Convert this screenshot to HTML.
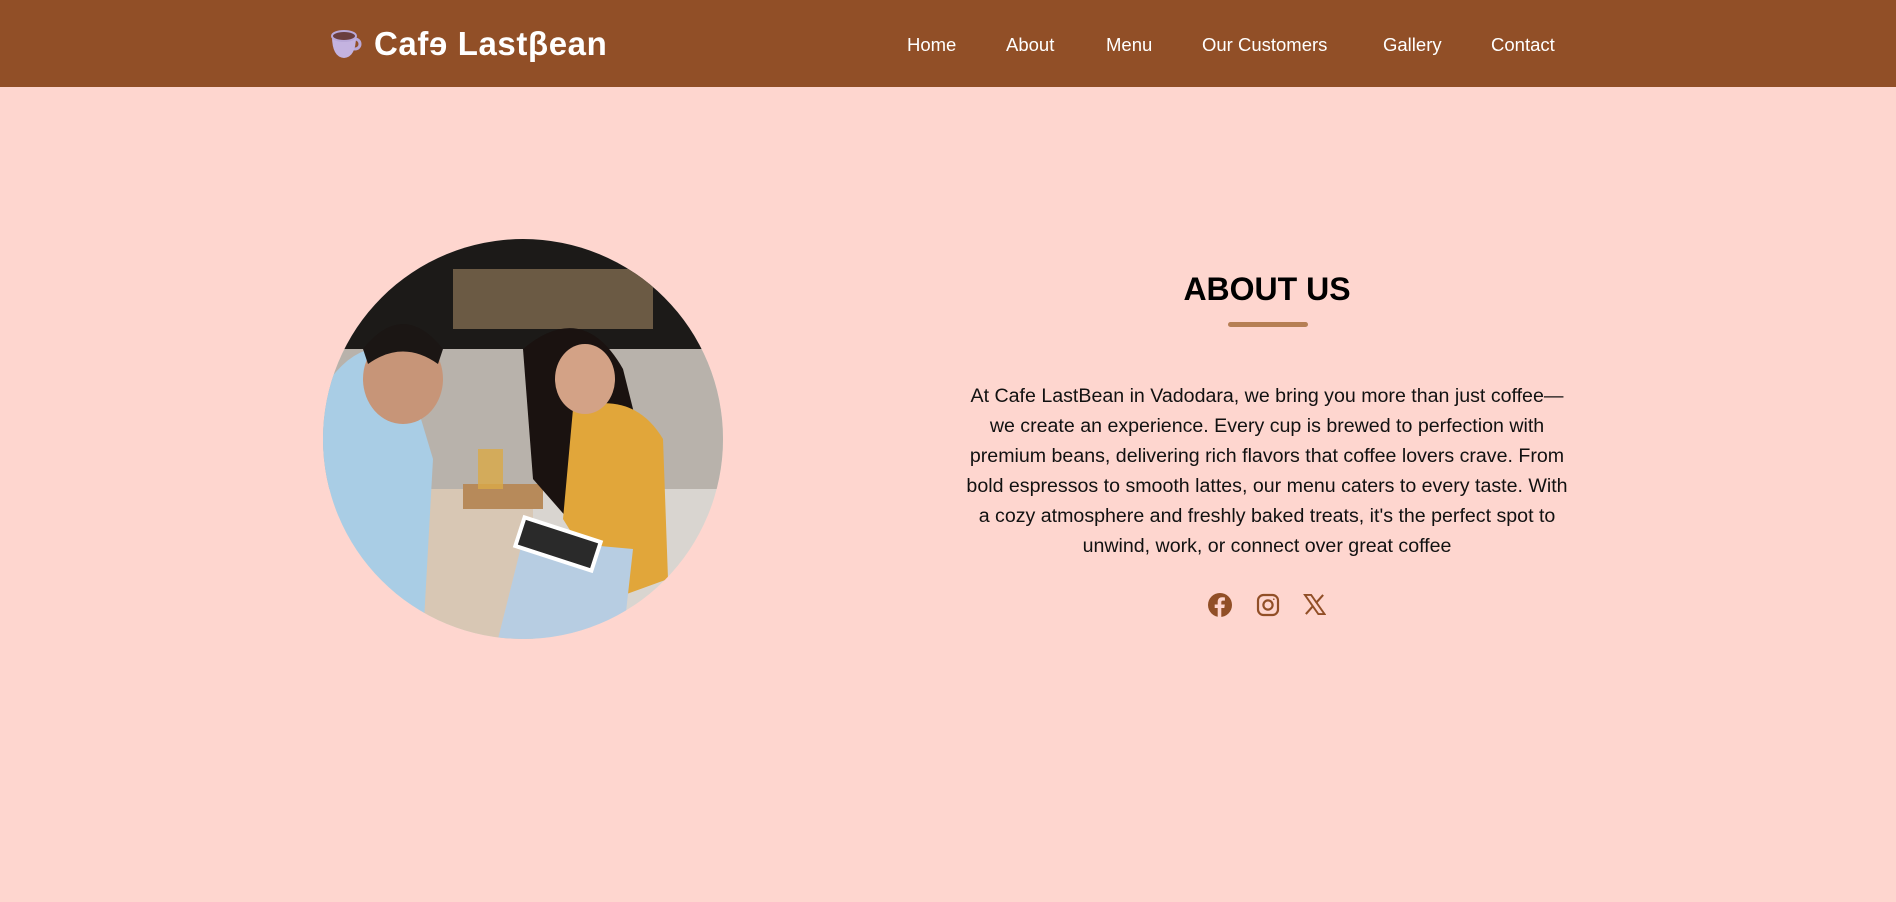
<!DOCTYPE html>
<html><head><meta charset="utf-8"><style>
*{margin:0;padding:0;box-sizing:border-box}
body{width:1896px;height:902px;background:#fed6cf;font-family:"Liberation Sans",sans-serif;position:relative;overflow:hidden}
header{position:absolute;left:0;top:0;width:1896px;height:87px;background:#914f27}
.logo{position:absolute;left:374px;top:25px;color:#fff;font-weight:bold;font-size:33px;letter-spacing:0.6px}
nav a{position:absolute;top:34px;color:#fff;font-size:18.5px;text-decoration:none}
.circle{position:absolute;left:323px;top:239px;width:400px;height:400px;border-radius:50%;overflow:hidden}
h2{position:absolute;left:1067px;width:400px;text-align:center;top:271px;font-size:32px;font-weight:bold;color:#000}
.bar{position:absolute;left:1228px;top:322px;width:80px;height:5px;border-radius:3px;background:#b67f54}
p{position:absolute;left:867px;width:800px;top:381px;text-align:center;font-size:19.6px;line-height:30px;color:#111;white-space:nowrap}
.ic{position:absolute;top:593px}
</style></head><body>
<header>
<svg style="position:absolute;left:328px;top:27px" width="34" height="34" viewBox="0 0 34 34"><ellipse cx="27" cy="17" rx="5" ry="5" fill="none" stroke="#b9a8d8" stroke-width="3"/><path d="M4 9 Q4 30 16 31 Q28 30 28 9Z" fill="#c4b3e0"/><ellipse cx="16" cy="9" rx="12" ry="5" fill="#6a3e3e" stroke="#b9a8d8" stroke-width="2"/></svg>
<div class="logo">Cafɘ Lastβean</div>
<nav><a style="left:907px">Home</a><a style="left:1006px">About</a><a style="left:1106px">Menu</a><a style="left:1202px">Our Customers</a><a style="left:1383px">Gallery</a><a style="left:1491px">Contact</a></nav>
</header>
<div class="circle"><svg width="400" height="400" viewBox="0 0 400 400">
<rect width="400" height="400" fill="#d9d5d0"/>
<rect width="400" height="110" fill="#1c1a18"/>
<rect x="130" y="30" width="200" height="60" fill="#6b5a44"/>
<rect x="0" y="110" width="400" height="140" fill="#b8b2ab"/>
<rect x="100" y="250" width="110" height="150" fill="#d8c7b4"/>
<rect x="140" y="245" width="80" height="25" fill="#b78a5a"/>
<path d="M0 150 Q40 90 80 120 L110 220 L100 400 L0 400Z" fill="#a9cde5"/>
<ellipse cx="80" cy="140" rx="40" ry="45" fill="#c79578"/>
<path d="M40 110 Q80 60 120 110 L115 125 Q80 100 45 125Z" fill="#1b1614"/>
<path d="M200 110 Q260 60 300 130 L330 250 L280 320 L210 240Z" fill="#1a1210"/>
<path d="M250 170 Q310 150 340 200 L345 340 L290 360 L240 280Z" fill="#e1a63a"/>
<ellipse cx="262" cy="140" rx="30" ry="35" fill="#d3a286"/>
<path d="M175 400 L200 300 L310 310 L300 400Z" fill="#b7cde2"/>
<rect x="195" y="290" width="80" height="30" fill="#2a2a2a" stroke="#fff" stroke-width="4" transform="rotate(18 235 305)"/>
<rect x="155" y="210" width="25" height="40" fill="#d9a947" opacity=".8"/>
</svg></div>
<h2>ABOUT US</h2>
<div class="bar"></div>
<p>At Cafe LastBean in Vadodara, we bring you more than just coffee—<br>we create an experience. Every cup is brewed to perfection with<br>premium beans, delivering rich flavors that coffee lovers crave. From<br>bold espressos to smooth lattes, our menu caters to every taste. With<br>a cozy atmosphere and freshly baked treats, it's the perfect spot to<br>unwind, work, or connect over great coffee</p>
<svg class="ic" style="left:1208px" width="24" height="24" viewBox="0 0 24 24"><circle cx="12" cy="12" r="12" fill="#914f27"/><path d="M13.3 24V15h3l.5-3.5h-3.5V9.3c0-1 .3-1.7 1.8-1.7h1.8V4.5c-.3 0-1.4-.2-2.7-.2-2.7 0-4.5 1.6-4.5 4.6v2.6H6.7V15h3v9Z" fill="#fed6cf"/></svg>
<svg class="ic" style="left:1256px" width="24" height="24" viewBox="0 0 24 24" fill="none" stroke="#914f27" stroke-width="2.2"><rect x="2" y="2" width="20" height="20" rx="5.5"/><circle cx="12" cy="12" r="4.6"/><circle cx="17.8" cy="6.2" r="0.8" fill="#914f27" stroke="none"/></svg>
<svg class="ic" style="left:1303px" width="23" height="23" viewBox="0 0 24 24"><path d="M2 2h6.5l14 20h-6.5Z" fill="none" stroke="#914f27" stroke-width="2"/><path d="M21 2 13.5 10.5M3 22l7.5-8.5" stroke="#914f27" stroke-width="2.2"/></svg>
</body></html>
